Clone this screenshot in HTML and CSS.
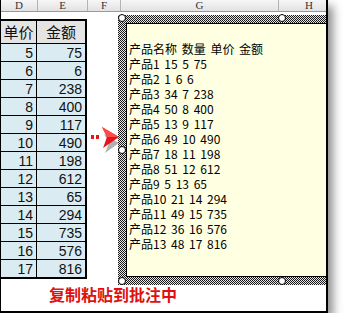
FILE: index.html
```html
<!DOCTYPE html>
<html lang="zh">
<head>
    <meta charset="UTF-8">
    <title>复制粘贴到批注中</title>
    <link rel="stylesheet" href="styles.css">
</head>
<body>

<div class="frame">
    <!-- cabecera de columnas -->
    <div class="colhead">
        <div class="col col-d">D</div>
        <div class="col col-e">E</div>
        <div class="col col-f">F</div>
        <div class="col col-g">G</div>
        <div class="col col-h">H</div>
    </div>

    <div class="sheet">
        <div class="data">
            <div class="grid">
                <div class="cell head">单价</div>
                <div class="cell head">金额</div>
                <div class="cell">5</div><div class="cell">75</div>
                <div class="cell">6</div><div class="cell">6</div>
                <div class="cell">7</div><div class="cell">238</div>
                <div class="cell">8</div><div class="cell">400</div>
                <div class="cell">9</div><div class="cell">117</div>
                <div class="cell">10</div><div class="cell">490</div>
                <div class="cell">11</div><div class="cell">198</div>
                <div class="cell">12</div><div class="cell">612</div>
                <div class="cell">13</div><div class="cell">65</div>
                <div class="cell">14</div><div class="cell">294</div>
                <div class="cell">15</div><div class="cell">735</div>
                <div class="cell">16</div><div class="cell">576</div>
                <div class="cell last">17</div><div class="cell last">816</div>
            </div>
        </div>

        <div class="pointer">
            <svg width="34" height="28" viewBox="0 0 34 28">
                <polygon points="18,9 33,18 19,28 23,18" fill="#000" opacity="0.3"/>
                <rect x="5" y="10" width="3" height="4" fill="#e01818"/>
                <rect x="10" y="10" width="3" height="4" fill="#e01818"/>
                <polygon points="16,2 33,12 17,23 21,12" fill="#e8141c"/>
                <polygon points="16,2 33,12 21,12" fill="#ff4a4a"/>
            </svg>
        </div>

        <div class="note">
            <span class="handle h-tl"></span>
            <span class="handle h-tm"></span>
            <span class="handle h-ml"></span>
            <span class="handle h-bl"></span>
            <span class="handle h-bm"></span>
            <div class="note-body">
                <div class="line">产品名称 数量 单价 金额</div>
                <div class="line">产品1 15 5 75</div>
                <div class="line">产品2 1 6 6</div>
                <div class="line">产品3 34 7 238</div>
                <div class="line">产品4 50 8 400</div>
                <div class="line">产品5 13 9 117</div>
                <div class="line">产品6 49 10 490</div>
                <div class="line">产品7 18 11 198</div>
                <div class="line">产品8 51 12 612</div>
                <div class="line">产品9 5 13 65</div>
                <div class="line">产品10 21 14 294</div>
                <div class="line">产品11 49 15 735</div>
                <div class="line">产品12 36 16 576</div>
                <div class="line">产品13 48 17 816</div>
            </div>
        </div>
    </div>

    <div class="caption">复制粘贴到批注中</div>
</div>

</body>
</html>
```

FILE: styles.css
```css
body {
    margin: 0;
    background-color: #fff;
    font-family: "Noto Sans CJK SC", sans-serif;
}
.frame {
    width: 328px;
    height: 313px;
    box-sizing: border-box;
    border-left: 1px solid #000;
    border-right: 2px solid #000;
    border-bottom: 2px solid #000;
    box-shadow: 5px 6px 9px rgba(0, 0, 0, 0.45);
    overflow: hidden;
    position: relative;
}

/* cabecera de columnas */
.colhead {
    display: flex;
    height: 11px;
    border-bottom: 1px solid #9a9a9a;
    background: linear-gradient(#f6f6f6, #e2e2e2);
}
.col {
    flex-shrink: 0;
    box-sizing: border-box;
    border-right: 1px solid #b4b4b4;
    font-family: "Liberation Serif", serif;
    font-size: 11px;
    line-height: 11px;
    color: #333;
    text-align: center;
}
.col-d { width: 37px; }
.col-e { width: 50px; }
.col-f { width: 33px; }
.col-g { width: 158px; }
.col-h { width: 60px; border-right: none; }

.sheet {
    display: flex;
    height: 273px;
}

/* tabla de datos */
.data {
    width: 87px;
    flex-shrink: 0;
    padding-top: 7px;
}
.grid {
    display: grid;
    grid-template-columns: 36px 48px;
    border-top: 2px solid #000;
    border-right: 2px solid #000;
    border-bottom: 2px solid #000;
    width: 84px;
}
.cell {
    height: 17px;
    border-bottom: 1px solid #000;
    background-color: #daecf2;
    font-family: "Liberation Sans", sans-serif;
    font-size: 14px;
    line-height: 18px;
    text-align: right;
    padding-right: 3px;
    color: #111;
}
.cell:nth-child(odd) {
    border-right: 1px solid #000;
}
.cell.head {
    height: 22px;
    background-color: #e4e4e4;
    font-family: "Noto Sans CJK SC", sans-serif;
    font-size: 15px;
    line-height: 22px;
    text-align: center;
    padding-right: 0;
}
.cell.last {
    border-bottom: none;
}

/* flecha */
.pointer {
    width: 30px;
    flex-shrink: 0;
    padding-top: 113px;
    margin-left: -2px;
    margin-right: 2px;
}
.pointer svg {
    display: block;
    overflow: visible;
}

/* comentario */
.note {
    position: relative;
    flex-shrink: 0;
    width: 328px;
    height: 270px;
    margin-top: 3px;
    box-sizing: border-box;
    padding: 8px;
    background: repeating-conic-gradient(#1a1a1a 0 25%, #e4e4e4 0 50%) 0 0 / 2px 2px;
}
.note-body {
    height: 100%;
    box-sizing: border-box;
    border: 1px solid #000;
    background-color: #ffffe1;
    padding: 17px 0 0 2px;
    font-size: 12px;
    color: #000;
}
.line {
    height: 15px;
    line-height: 15px;
    word-spacing: 2px;
    white-space: nowrap;
}
.handle {
    position: absolute;
    width: 6px;
    height: 6px;
    border: 1px solid #000;
    border-radius: 50%;
    background-color: #fff;
}
.h-tl { left: 0; top: -1px; }
.h-tm { left: 160px; top: -1px; }
.h-ml { left: 0; top: 131px; }
.h-bl { left: 0; top: 262px; }
.h-bm { left: 160px; top: 262px; }

.caption {
    padding-left: 48px;
    font-size: 16px;
    font-weight: bold;
    line-height: 18px;
    color: #e01010;
}
```
